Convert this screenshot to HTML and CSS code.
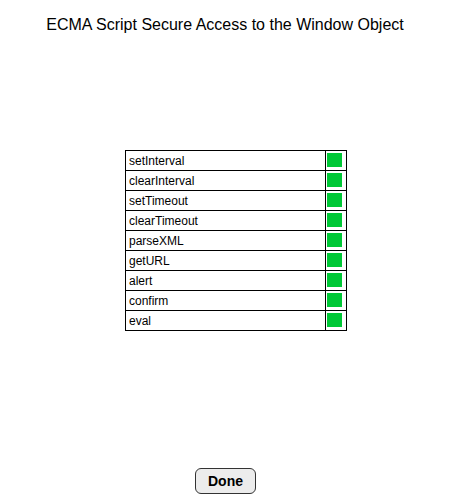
FILE: index.html
```html
<!DOCTYPE html>
<html>
<head>
<meta charset="utf-8">
<link rel="stylesheet" href="styles.css">
</head>
<body>
<h1 class="title">ECMA Script Secure Access to the Window Object</h1>
<div class="grid">
  <div class="row"><div class="name">setInterval</div><div class="status"><div class="ok"></div></div></div>
  <div class="row"><div class="name">clearInterval</div><div class="status"><div class="ok"></div></div></div>
  <div class="row"><div class="name">setTimeout</div><div class="status"><div class="ok"></div></div></div>
  <div class="row"><div class="name">clearTimeout</div><div class="status"><div class="ok"></div></div></div>
  <div class="row"><div class="name">parseXML</div><div class="status"><div class="ok"></div></div></div>
  <div class="row"><div class="name">getURL</div><div class="status"><div class="ok"></div></div></div>
  <div class="row"><div class="name">alert</div><div class="status"><div class="ok"></div></div></div>
  <div class="row"><div class="name">confirm</div><div class="status"><div class="ok"></div></div></div>
  <div class="row"><div class="name">eval</div><div class="status"><div class="ok"></div></div></div>
</div>
<div class="actions"><button class="done">Done</button></div>
</body>
</html>
```
FILE: styles.css
```css
html, body {
  margin: 0;
  padding: 0;
  background: #fff;
  font-family: "Liberation Sans", Arial, sans-serif;
  color: #000;
}
.title {
  margin: 0;
  padding-top: 16px;
  font-size: 16px;
  font-weight: normal;
  line-height: 18px;
  text-align: center;
}
.grid {
  margin: 116px 0 0 125px;
  width: 220px;
  border: 1px solid #000;
}
.row {
  display: flex;
  height: 19px;
  border-bottom: 1px solid #000;
}
.row:last-child {
  border-bottom: none;
}
.name {
  width: 196px;
  padding: 1px 0 0 3px;
  border-right: 1px solid #000;
  font-size: 12px;
  line-height: 18px;
}
.status {
  width: 20px;
}
.ok {
  width: 15px;
  height: 14px;
  margin: 2px 0 0 1px;
  background: #00c837;
}
.actions {
  display: flex;
  justify-content: center;
  margin-top: 137px;
  padding-left: 1px;
}
.done {
  width: 61px;
  height: 26px;
  padding: 0;
  border: 1px solid #333;
  border-radius: 6px;
  background: #ececec;
  font-family: "Liberation Sans", Arial, sans-serif;
  font-size: 14px;
  font-weight: bold;
  color: #000;
}
```
